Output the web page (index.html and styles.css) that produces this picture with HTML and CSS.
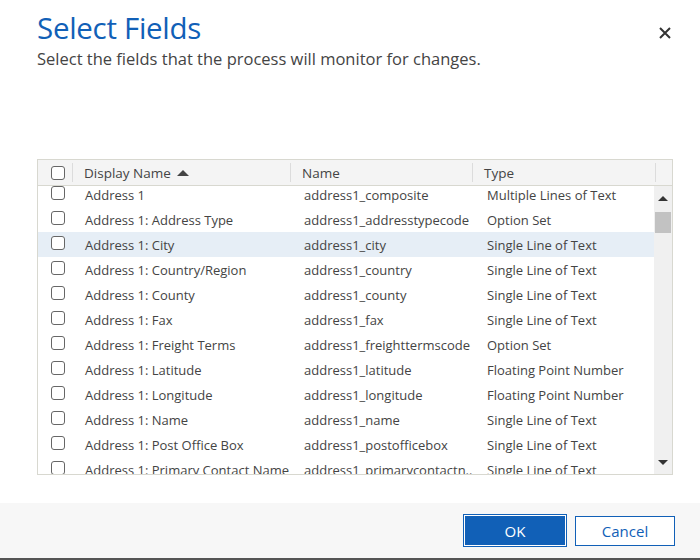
FILE: index.html
```html
<!DOCTYPE html>
<html>
<head>
<meta charset="utf-8">
<link rel="stylesheet" href="styles.css">
</head>
<body>
<div class="dialog">
  <div class="head">
    <div class="titles">
      <h1 class="title">Select Fields</h1>
      <p class="subtitle">Select the fields that the process will monitor for changes.</p>
    </div>
    <button class="close" aria-label="Close">
      <svg width="12" height="12" viewBox="0 0 12 12"><path d="M1 1L11 11M11 1L1 11" stroke="#333" stroke-width="2" fill="none"/></svg>
    </button>
  </div>
  <div class="content">
    <div class="grid">
      <div class="grid-head">
        <div class="hcell chk"><span class="box"></span></div>
        <div class="hcell sep">Display Name <span class="sort"></span></div>
        <div class="hcell sep">Name</div>
        <div class="hcell sep">Type</div>
        <div class="hcell sep last"></div>
      </div>
      <div class="grid-body">
        <div class="rows">
          <div class="row"><div class="cell chk"><span class="box"></span></div><div class="cell c1">Address 1</div><div class="cell c2">address1_composite</div><div class="cell c3">Multiple Lines of Text</div></div>
          <div class="row"><div class="cell chk"><span class="box"></span></div><div class="cell c1">Address 1: Address Type</div><div class="cell c2">address1_addresstypecode</div><div class="cell c3">Option Set</div></div>
          <div class="row sel"><div class="cell chk"><span class="box"></span></div><div class="cell c1">Address 1: City</div><div class="cell c2">address1_city</div><div class="cell c3">Single Line of Text</div></div>
          <div class="row"><div class="cell chk"><span class="box"></span></div><div class="cell c1">Address 1: Country/Region</div><div class="cell c2">address1_country</div><div class="cell c3">Single Line of Text</div></div>
          <div class="row"><div class="cell chk"><span class="box"></span></div><div class="cell c1">Address 1: County</div><div class="cell c2">address1_county</div><div class="cell c3">Single Line of Text</div></div>
          <div class="row"><div class="cell chk"><span class="box"></span></div><div class="cell c1">Address 1: Fax</div><div class="cell c2">address1_fax</div><div class="cell c3">Single Line of Text</div></div>
          <div class="row"><div class="cell chk"><span class="box"></span></div><div class="cell c1">Address 1: Freight Terms</div><div class="cell c2">address1_freighttermscode</div><div class="cell c3">Option Set</div></div>
          <div class="row"><div class="cell chk"><span class="box"></span></div><div class="cell c1">Address 1: Latitude</div><div class="cell c2">address1_latitude</div><div class="cell c3">Floating Point Number</div></div>
          <div class="row"><div class="cell chk"><span class="box"></span></div><div class="cell c1">Address 1: Longitude</div><div class="cell c2">address1_longitude</div><div class="cell c3">Floating Point Number</div></div>
          <div class="row"><div class="cell chk"><span class="box"></span></div><div class="cell c1">Address 1: Name</div><div class="cell c2">address1_name</div><div class="cell c3">Single Line of Text</div></div>
          <div class="row"><div class="cell chk"><span class="box"></span></div><div class="cell c1">Address 1: Post Office Box</div><div class="cell c2">address1_postofficebox</div><div class="cell c3">Single Line of Text</div></div>
          <div class="row"><div class="cell chk"><span class="box"></span></div><div class="cell c1">Address 1: Primary Contact Name</div><div class="cell c2">address1_primarycontactn...</div><div class="cell c3">Single Line of Text</div></div>
        </div>
        <div class="scrollbar">
          <span class="arrow up"></span>
          <div class="track"><div class="thumb"></div></div>
          <span class="arrow down"></span>
        </div>
      </div>
    </div>
  </div>
  <div class="footer">
    <button class="btn ok">OK</button>
    <button class="btn cancel">Cancel</button>
  </div>
</div>
</body>
</html>
```

FILE: styles.css
```css
* { box-sizing: border-box; }
html, body { margin: 0; padding: 0; background: #fff; }
body { font-family: "Open Sans", "Noto Sans", sans-serif; color: #444; }

.dialog {
  width: 700px;
  height: 560px;
  display: flex;
  flex-direction: column;
  border-bottom: 2px solid #555;
}

.head {
  display: flex;
  justify-content: space-between;
  align-items: flex-start;
  padding: 8px 28px 0 37px;
}
.title {
  margin: 0;
  font-weight: 400;
  font-size: 29.5px;
  line-height: 40px;
  color: #1160b7;
  letter-spacing: -0.3px;
}
.subtitle {
  margin: 0;
  font-size: 16.5px;
  line-height: 22px;
  color: #444;
}
.close {
  border: 0;
  background: transparent;
  padding: 0;
  margin-top: 18px;
  width: 14px;
  height: 14px;
  display: flex;
  align-items: center;
  justify-content: center;
}

.content {
  flex: 1;
  padding: 89px 27px 0 37px;
}
.grid {
  width: 636px;
  height: 316px;
  border: 1px solid #d8d8d0;
  display: flex;
  flex-direction: column;
}
.grid-head {
  height: 26px;
  background: #f4f4f4;
  border-bottom: 1px solid #d8d8d0;
  display: grid;
  grid-template-columns: 34px 218px 182px 183px 17px;
  font-size: 13.5px;
  color: #444;
}
.hcell {
  display: flex;
  align-items: center;
  position: relative;
  padding-left: 12px;
}
.hcell.chk { padding-left: 13px; }
.hcell.sep::before {
  content: "";
  position: absolute;
  left: 0;
  top: 3px;
  bottom: 3px;
  width: 1px;
  background: #dcdcdc;
}
.sort {
  display: inline-block;
  width: 0;
  height: 0;
  margin-left: 6px;
  border-left: 6px solid transparent;
  border-right: 6px solid transparent;
  border-bottom: 6px solid #444;
}

.box {
  display: inline-block;
  width: 14px;
  height: 14px;
  border: 1px solid #666;
  border-radius: 3px;
  background: #fff;
}

.grid-body {
  flex: 1;
  display: flex;
  overflow: hidden;
}
.rows {
  flex: 1;
  overflow: hidden;
}
.row {
  height: 25px;
  display: grid;
  grid-template-columns: 34px 218px 182px 183px;
  font-size: 13px;
  color: #444;
  white-space: nowrap;
}
.row:first-child { margin-top: -4px; }
.row.sel { background: #e6eef6; }
.cell {
  display: flex;
  align-items: center;
  overflow: hidden;
  padding-top: 1px;
}
.cell.chk { padding-left: 13px; align-items: flex-start; padding-top: 4px; }
.cell.c1 { padding-left: 13px; }
.cell.c2 { padding-left: 14px; }
.cell.c3 { padding-left: 15px; }

.scrollbar {
  width: 18px;
  background: #f0f0f0;
  display: flex;
  flex-direction: column;
  align-items: center;
  padding: 10px 0 9px;
}
.arrow {
  width: 0;
  height: 0;
  border-left: 5px solid transparent;
  border-right: 5px solid transparent;
}
.arrow.up { border-bottom: 5px solid #333; }
.arrow.down { border-top: 5px solid #333; }
.track {
  flex: 1;
  width: 100%;
  padding: 11px 1px 0;
}
.thumb {
  height: 21px;
  background: #c2c2c2;
}

.footer {
  height: 55px;
  background: #f7f7f7;
  display: flex;
  justify-content: flex-end;
  align-items: center;
  gap: 8px;
  padding: 0 25px 0 0;
}
.btn {
  font-family: "Open Sans", "Noto Sans", sans-serif;
  font-size: 15px;
  cursor: pointer;
}
.btn.ok {
  width: 104px;
  height: 33px;
  background: #1160b7;
  color: #fff;
  border: 1px solid #1160b7;
  box-shadow: inset 0 0 0 1px #fff;
}
.btn.cancel {
  width: 100px;
  height: 30px;
  background: #fff;
  color: #1160b7;
  border: 1px solid #1160b7;
}
```
